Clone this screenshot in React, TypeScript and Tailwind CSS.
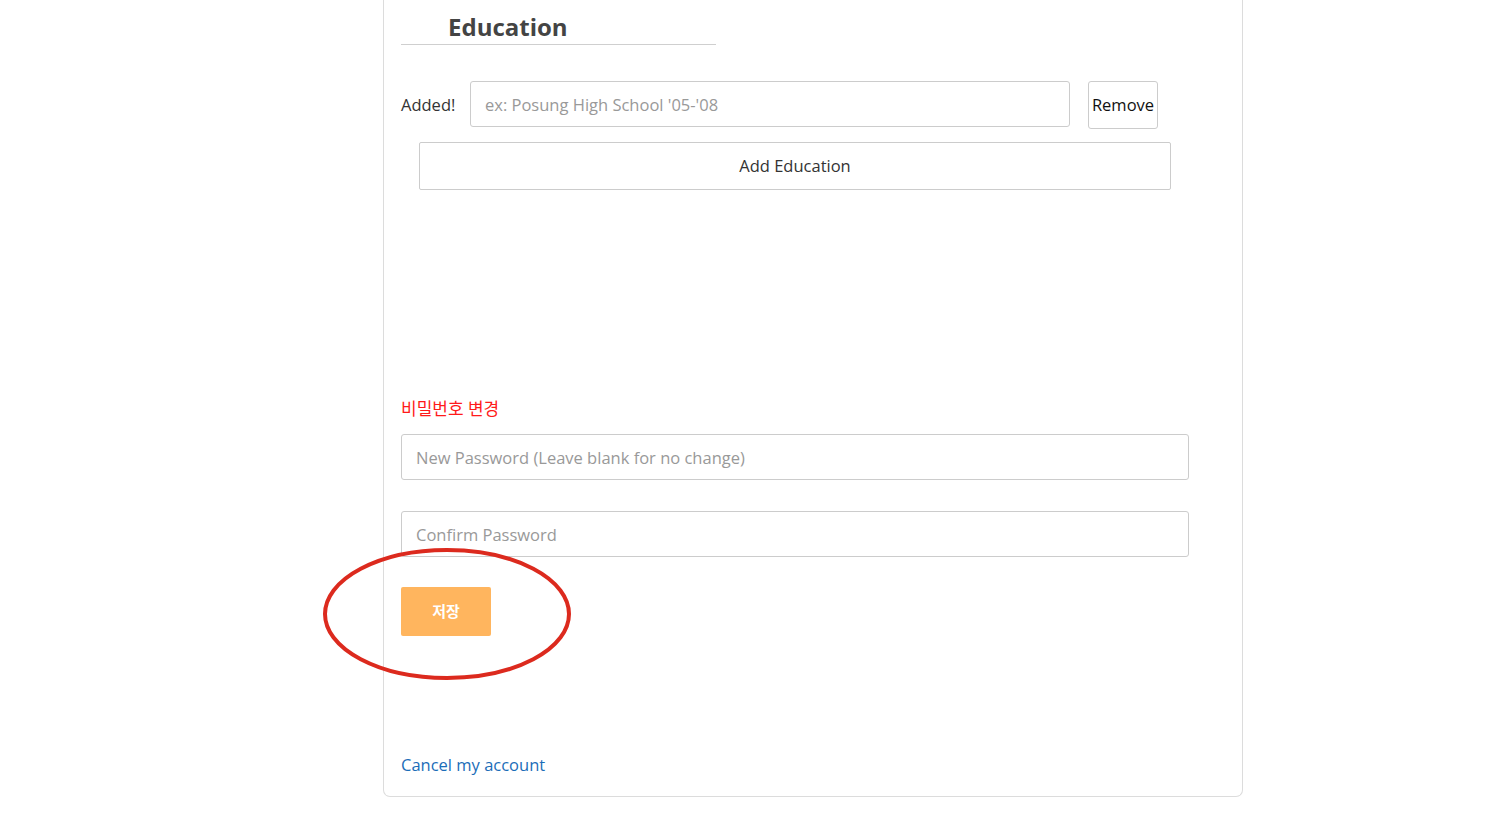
import React from "react";

export default function App() {
  const font = { fontFamily: '"Open Sans", "Noto Sans CJK KR", sans-serif' } as React.CSSProperties;
  return (
    <div className="min-h-[820px] w-[1500px] bg-white" style={font}>
      <div className="ml-[383px] w-[860px] rounded-b-[7px] border border-t-0 border-[#dcdcdc] pl-[17px] pr-[53px] pb-[19px]">
        <div className="w-[315px] border-b border-[#cfcfcf] pt-[12px] pb-[3px] pl-[47px] text-[24px] font-bold leading-[29px] text-[#444]">
          Education
        </div>

        <div className="mt-[36px] flex items-start">
          <div className="flex h-[46px] w-[54px] shrink-0 items-center pt-[3px] text-[16.5px] text-[#333]">Added!</div>
          <input
            className="ml-[15px] h-[46px] w-[600px] rounded-[3px] border border-[#ccc] px-[14px] pt-[1px] text-[16.5px] text-[#333] outline-none placeholder:text-[#999]"
            placeholder="ex: Posung High School '05-'08"
          />
          <button className="ml-[18px] h-[48px] w-[70px] rounded-[3px] border border-[#ccc] bg-white text-[16.5px] text-[#111]">
            Remove
          </button>
        </div>

        <button className="mt-[13px] ml-[18px] h-[48px] w-[752px] rounded-[2px] border border-[#ccc] bg-white text-[16.5px] text-[#333]">
          Add Education
        </button>

        <div className="mt-[207px] text-[17px] leading-[24px] text-[#ff1a1a]">비밀번호 변경</div>

        <input
          type="password"
          className="mt-[13px] block h-[46px] w-[788px] rounded-[3px] border border-[#ccc] px-[14px] pt-[1px] text-[16.5px] outline-none placeholder:text-[#999]"
          placeholder="New Password (Leave blank for no change)"
        />
        <input
          type="password"
          className="mt-[31px] block h-[46px] w-[788px] rounded-[3px] border border-[#ccc] px-[14px] pt-[1px] text-[16.5px] outline-none placeholder:text-[#999]"
          placeholder="Confirm Password"
        />

        <div className="relative mt-[30px] h-[49px] w-[90px]">
          <button className="h-[49px] w-[90px] rounded-[2px] bg-[#ffb55e] text-[15px] font-bold text-white">
            저장
          </button>
          <svg
            className="pointer-events-none absolute left-[-79px] top-[-40px]"
            width="250"
            height="134"
            viewBox="0 0 250 134"
          >
            <ellipse cx="125" cy="67" rx="122" ry="64" fill="none" stroke="#dc2a1e" strokeWidth="4" />
          </svg>
        </div>

        <div className="mt-[117px] text-[16.5px] leading-[24px]">
          <a className="text-[#1b6db8]" href="#">Cancel my account</a>
        </div>
      </div>
    </div>
  );
}
